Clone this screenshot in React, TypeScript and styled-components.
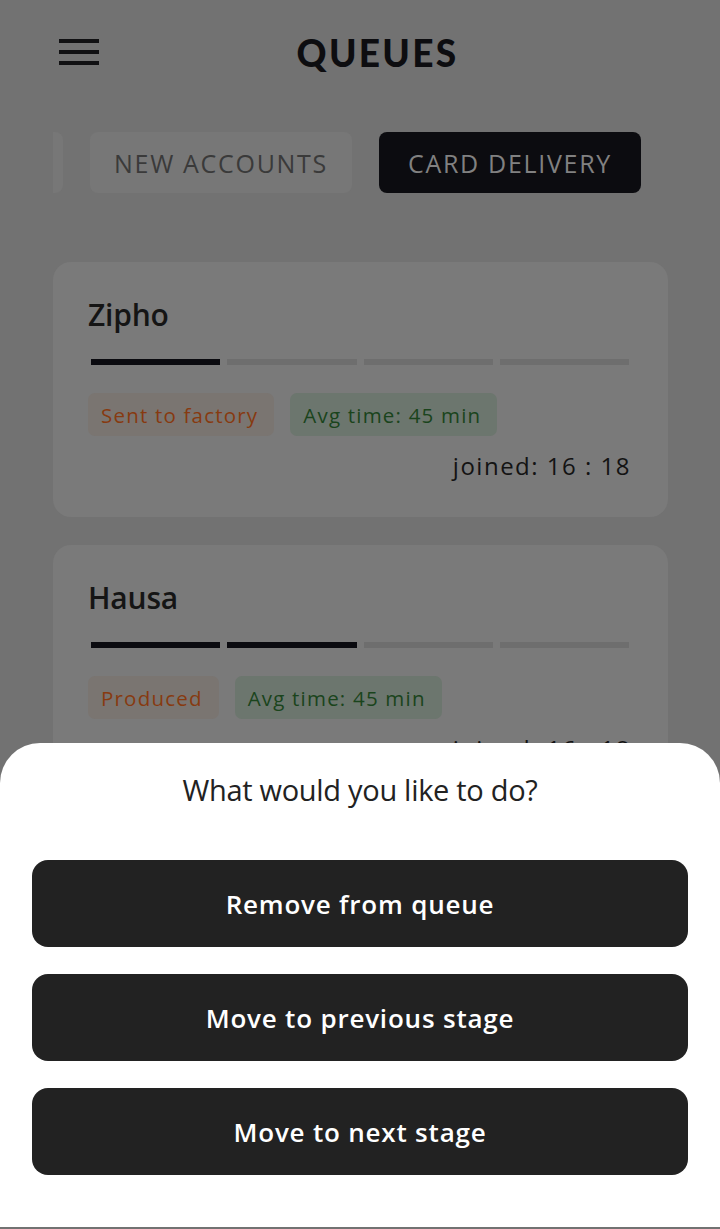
import React from "react";
import styled, { createGlobalStyle } from "styled-components";

const Global = createGlobalStyle`
  html, body { margin: 0; padding: 0; background: #727272; }
  body { font-family: "Open Sans", "Noto Sans", sans-serif; }
  * { box-sizing: border-box; }
`;

const Page = styled.div`
  min-height: 1229px;
  background: #727272;
  padding: 24px 52px 0 53px;
`;

const Header = styled.header`
  position: relative;
  height: 56px;
  padding-left: 34px;
  display: flex;
  align-items: center;
  justify-content: center;
`;

const MenuButton = styled.button`
  position: absolute;
  left: 6px;
  top: 50%;
  transform: translateY(-50%);
  width: 40px;
  height: 30px;
  border: 0;
  background: transparent;
  display: flex;
  flex-direction: column;
  justify-content: space-between;
  padding: 2px 0;
`;

const MenuLine = styled.span`
  display: block;
  height: 4px;
  width: 40px;
  background: #111113;
`;

const Title = styled.h1`
  margin: 0;
  font-family: "Lato", sans-serif;
  font-weight: 900;
  font-size: 37px;
  letter-spacing: 2.3px;
  color: #0d0d10;
`;

const TabRow = styled.div`
  margin-top: 52px;
  display: flex;
  justify-content: flex-end;
  gap: 27px;
  overflow: hidden;
  padding-right: 27px;
`;

const Tab = styled.div<{ $active?: boolean }>`
  flex: 0 0 262px;
  height: 61px;
  border-radius: 8px;
  display: flex;
  align-items: center;
  justify-content: center;
  font-size: 25px;
  font-weight: 500;
  letter-spacing: 1.7px;
  text-transform: uppercase;
  background: ${(p) => (p.$active ? "#0c0c10" : "#777777")};
  color: ${(p) => (p.$active ? "#818181" : "#3a3a3a")};
`;

const CardList = styled.div`
  margin-top: 69px;
  display: flex;
  flex-direction: column;
  gap: 28px;
`;

const Card = styled.div`
  background: #7a7a7a;
  border-radius: 18px;
  padding: 33px 37px 35px 35px;
  display: flex;
  flex-direction: column;
`;

const Name = styled.div`
  font-size: 30px;
  line-height: 40px;
  font-weight: 600;
  color: #151515;
  letter-spacing: -0.2px;
`;

const Bars = styled.div`
  margin: 24px 2px 0 3px;
  display: grid;
  grid-template-columns: repeat(4, 1fr);
  gap: 7px;
`;

const Bar = styled.div<{ $done?: boolean }>`
  height: 6px;
  background: ${(p) => (p.$done ? "#0b0b10" : "#6e6e6e")};
`;

const Badges = styled.div`
  margin-top: 28px;
  display: flex;
  gap: 16px;
`;

const Badge = styled.span<{ $tone: "orange" | "green" }>`
  height: 43px;
  padding: 0 16px 0 13px;
  border-radius: 7px;
  display: inline-flex;
  align-items: center;
  font-size: 20.5px;
  font-weight: 500;
  letter-spacing: 1.2px;
  background: ${(p) => (p.$tone === "orange" ? "#7a7571" : "#6c766e")};
  color: ${(p) => (p.$tone === "orange" ? "#873a10" : "#1a441c")};
`;

const Joined = styled.div`
  margin-top: 14px;
  text-align: right;
  font-size: 24px;
  line-height: 32px;
  font-weight: 500;
  letter-spacing: 1.5px;
  color: #131313;
`;

const Sheet = styled.div`
  position: fixed;
  left: 0;
  right: 0;
  bottom: 2px;
  background: #ffffff;
  border-radius: 40px 40px 0 0;
  padding: 28px 32px 52px;
  display: flex;
  flex-direction: column;
`;

const SheetTitle = styled.div`
  text-align: center;
  font-size: 29px;
  line-height: 38px;
  font-weight: 500;
  letter-spacing: -0.3px;
  color: #222222;
  margin-bottom: 51px;
`;

const Actions = styled.div`
  display: flex;
  flex-direction: column;
  gap: 27px;
`;

const ActionButton = styled.button`
  height: 87px;
  border: 0;
  border-radius: 16px;
  background: #222222;
  color: #ffffff;
  font-family: "Open Sans", sans-serif;
  font-size: 26px;
  font-weight: 600;
  letter-spacing: 0.8px;
`;

const queues = [
  { name: "Zipho", stage: 1, status: "Sent to factory" },
  { name: "Hausa", stage: 2, status: "Produced" },
];

export default function App() {
  return (
    <>
      <Global />
      <Page>
        <Header>
          <MenuButton aria-label="menu">
            <MenuLine />
            <MenuLine />
            <MenuLine />
          </MenuButton>
          <Title>QUEUES</Title>
        </Header>
        <TabRow>
          <Tab aria-label="Waiting" />
          <Tab>New accounts</Tab>
          <Tab $active>Card delivery</Tab>
        </TabRow>
        <CardList>
          {queues.map((q) => (
            <Card key={q.name}>
              <Name>{q.name}</Name>
              <Bars>
                {[0, 1, 2, 3].map((i) => (
                  <Bar key={i} $done={i < q.stage} />
                ))}
              </Bars>
              <Badges>
                <Badge $tone="orange">{q.status}</Badge>
                <Badge $tone="green">Avg time: 45 min</Badge>
              </Badges>
              <Joined>joined: 16 : 18</Joined>
            </Card>
          ))}
        </CardList>
      </Page>
      <Sheet>
        <SheetTitle>What would you like to do?</SheetTitle>
        <Actions>
          <ActionButton>Remove from queue</ActionButton>
          <ActionButton>Move to previous stage</ActionButton>
          <ActionButton>Move to next stage</ActionButton>
        </Actions>
      </Sheet>
    </>
  );
}
